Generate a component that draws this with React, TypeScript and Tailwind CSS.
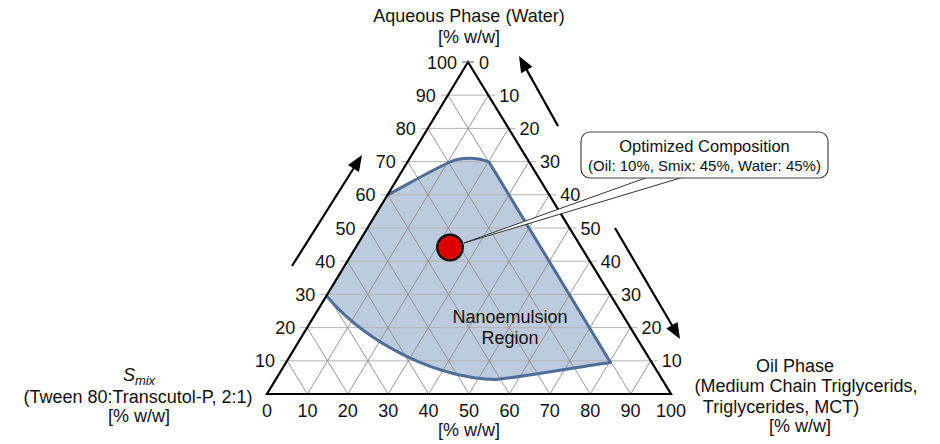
// Ternary phase diagram – nanoemulsion region with optimized composition callout

type P = { x: number; y: number }

const L: P = { x: 267, y: 394 }
const R: P = { x: 671, y: 394 }
const T: P = { x: 468, y: 62 }

const lerp = (a: P, b: P, t: number): P => ({ x: a.x + (b.x - a.x) * t, y: a.y + (b.y - a.y) * t })

const FONT = "'Liberation Sans', Arial, Helvetica, sans-serif"
const STEPS = [1, 2, 3, 4, 5, 6, 7, 8, 9]
const RIGHT_LABELS = ['10', '20', '30', '40', '50', '40', '30', '20', '10']

function Arrow({ from, to }: { from: P; to: P }) {
  const dx = to.x - from.x
  const dy = to.y - from.y
  const len = Math.hypot(dx, dy)
  const ux = dx / len
  const uy = dy / len
  const h = 16
  const w = 6.5
  const bx = to.x - ux * h
  const by = to.y - uy * h
  const head = `${to.x},${to.y} ${bx - uy * w},${by + ux * w} ${bx + uy * w},${by - ux * w}`
  return (
    <g>
      <line x1={from.x} y1={from.y} x2={bx + ux * 3} y2={by + uy * 3} stroke="#000" strokeWidth={2.2} />
      <polygon points={head} fill="#000" />
    </g>
  )
}

function TernaryChart() {
  return (
    <svg width={940} height={444} viewBox="0 0 940 444" className="block" style={{ fontFamily: FONT }}>
      {/* nanoemulsion region */}
      <path
        d="M 387.5 195 C 410 183 432 170 450 162 C 460 157 478 157 489 162 L 610.5 362.5 C 570 368 530 376 496 379.5 C 440 378 370 347 326.5 296 Z"
        fill="#bdcbde"
      />

      {/* horizontal grid (water) */}
      {STEPS.map(k => {
        const a = lerp(L, T, k / 10)
        const b = lerp(R, T, k / 10)
        return <line key={`h${k}`} x1={a.x - 7} y1={a.y} x2={b.x + 7} y2={b.y} stroke="#b4b4b4" strokeWidth={1} />
      })}

      {/* diagonal grid */}
      {STEPS.map(i => {
        const b = lerp(L, R, i / 10)
        const r = lerp(R, T, (10 - i) / 10)
        const l = lerp(L, T, i / 10)
        return (
          <g key={`d${i}`}>
            <line x1={b.x} y1={b.y} x2={r.x} y2={r.y} stroke="#8c8c8c" strokeWidth={0.9} />
            <line x1={b.x} y1={b.y} x2={l.x} y2={l.y} stroke="#8c8c8c" strokeWidth={0.9} />
          </g>
        )
      })}

      {/* region outline */}
      <path
        d="M 387.5 195 C 410 183 432 170 450 162 C 460 157 478 157 489 162 L 610.5 362.5 C 570 368 530 376 496 379.5 C 440 378 370 347 326.5 296"
        fill="none"
        stroke="#4e6d98"
        strokeWidth={3}
        strokeLinejoin="round"
      />

      {/* triangle */}
      <polygon points={`${L.x},${L.y} ${R.x},${R.y} ${T.x},${T.y}`} fill="none" stroke="#000" strokeWidth={2.2} strokeLinejoin="miter" />
      <line x1={T.x - 6} y1={T.y} x2={T.x + 6} y2={T.y} stroke="#555" strokeWidth={1} />

      {/* left labels */}
      {STEPS.map(k => {
        const a = lerp(L, T, k / 10)
        return (
          <text key={`ll${k}`} x={a.x - 12} y={a.y + 6.5} fontSize={18} textAnchor="end" fill="#111">
            {k * 10}
          </text>
        )
      })}
      <text x={T.x - 11} y={T.y + 6.5} fontSize={18} textAnchor="end" fill="#111">100</text>
      <text x={T.x + 11} y={T.y + 6.5} fontSize={18} fill="#111">0</text>

      {/* right labels */}
      {STEPS.map(k => {
        const a = lerp(R, T, (10 - k) / 10)
        return (
          <text key={`rl${k}`} x={a.x + 11} y={a.y + 6.5} fontSize={18} fill="#111">
            {RIGHT_LABELS[k - 1]}
          </text>
        )
      })}

      {/* bottom labels */}
      {[0, ...STEPS, 10].map(i => {
        const b = lerp(L, R, i / 10)
        return (
          <text key={`bl${i}`} x={b.x} y={416.5} fontSize={18} textAnchor="middle" fill="#111">
            {i * 10}
          </text>
        )
      })}

      {/* axis titles */}
      <text x={469} y={22} fontSize={18} textAnchor="middle" fill="#111">Aqueous Phase (Water)</text>
      <text x={469} y={43} fontSize={18} textAnchor="middle" fill="#111">[% w/w]</text>
      <text x={469} y={436} fontSize={18} textAnchor="middle" fill="#111">[% w/w]</text>

      <text x={139} y={381} fontSize={18} textAnchor="middle" fill="#111" fontStyle="italic">
        S<tspan fontSize={13} dy={4}>mix</tspan>
      </text>
      <text x={138} y={403} fontSize={18} textAnchor="middle" fill="#111">(Tween 80:Transcutol-P, 2:1)</text>
      <text x={139} y={422} fontSize={18} textAnchor="middle" fill="#111">[% w/w]</text>

      <text x={795} y={372} fontSize={18} textAnchor="middle" fill="#111">Oil Phase</text>
      <text x={806} y={392} fontSize={18} textAnchor="middle" fill="#111">(Medium Chain Triglycerids,</text>
      <text x={781} y={413} fontSize={18} textAnchor="middle" fill="#111">Triglycerides, MCT)</text>
      <text x={800} y={432} fontSize={18} textAnchor="middle" fill="#111">[% w/w]</text>

      {/* region label */}
      <text x={510} y={323} fontSize={18} textAnchor="middle" fill="#111">Nanoemulsion</text>
      <text x={510} y={344} fontSize={18} textAnchor="middle" fill="#111">Region</text>

      {/* direction arrows */}
      <Arrow from={{ x: 292, y: 266 }} to={{ x: 362, y: 155 }} />
      <Arrow from={{ x: 558, y: 126 }} to={{ x: 519, y: 56 }} />
      <Arrow from={{ x: 615, y: 228 }} to={{ x: 680, y: 339 }} />

      {/* callout */}
      <polygon points="464,243 651,176 687,176" fill="#fff" stroke="#333" strokeWidth={1} strokeLinejoin="round" />
      <rect x={581} y={132} width={247} height={46} rx={9} fill="#fff" stroke="#444" strokeWidth={1.2} />
      <text x={704.5} y={152} fontSize={16.5} textAnchor="middle" fill="#111">Optimized Composition</text>
      <text x={704.5} y={170.5} fontSize={15} textAnchor="middle" fill="#111">(Oil: 10%, Smix: 45%, Water: 45%)</text>

      {/* optimized point */}
      <circle cx={450} cy={247.5} r={12.8} fill="#e00000" stroke="#111" strokeWidth={2.4} />
    </svg>
  )
}

export default function App() {
  return (
    <div className="w-[940px] h-[444px] bg-white overflow-hidden">
      <TernaryChart />
    </div>
  )
}
